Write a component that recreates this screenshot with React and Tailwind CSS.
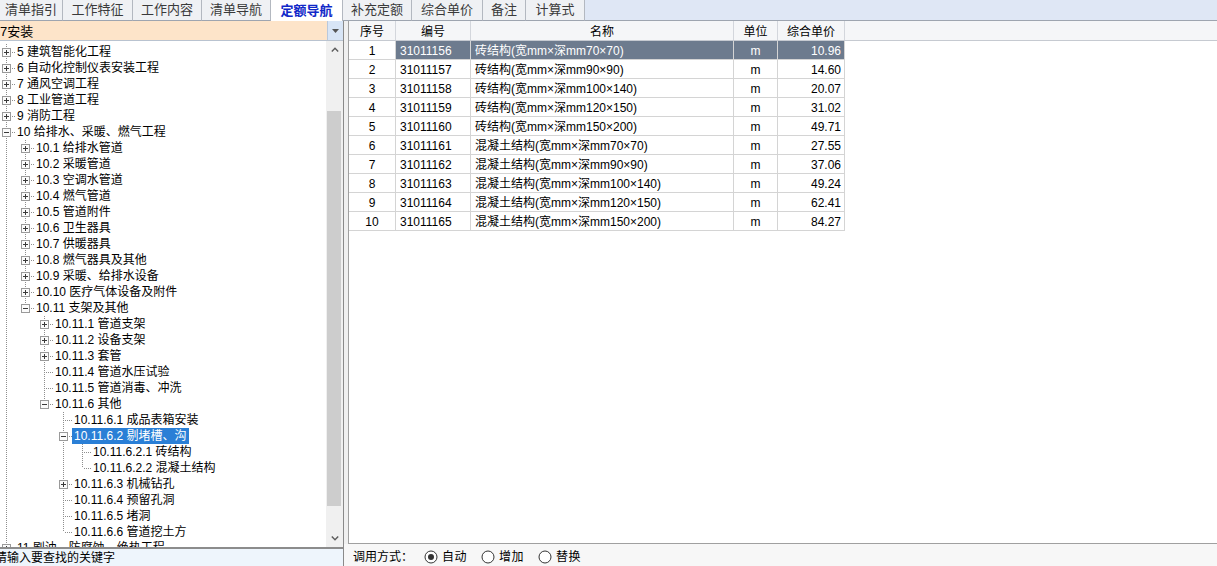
import React from "react";

const treeRaw = [
  [0, "5 建筑智能化工程", "p"],
  [0, "6 自动化控制仪表安装工程", "p"],
  [0, "7 通风空调工程", "p"],
  [0, "8 工业管道工程", "p"],
  [0, "9 消防工程", "p"],
  [0, "10 给排水、采暖、燃气工程", "m"],
  [1, "10.1 给排水管道", "p"],
  [1, "10.2 采暖管道", "p"],
  [1, "10.3 空调水管道", "p"],
  [1, "10.4 燃气管道", "p"],
  [1, "10.5 管道附件", "p"],
  [1, "10.6 卫生器具", "p"],
  [1, "10.7 供暖器具", "p"],
  [1, "10.8 燃气器具及其他", "p"],
  [1, "10.9 采暖、给排水设备", "p"],
  [1, "10.10 医疗气体设备及附件", "p"],
  [1, "10.11 支架及其他", "m"],
  [2, "10.11.1 管道支架", "p"],
  [2, "10.11.2 设备支架", "p"],
  [2, "10.11.3 套管", "p"],
  [2, "10.11.4 管道水压试验", "l"],
  [2, "10.11.5 管道消毒、冲洗", "l"],
  [2, "10.11.6 其他", "m"],
  [3, "10.11.6.1 成品表箱安装", "l"],
  [3, "10.11.6.2 剔堵槽、沟", "m", true],
  [4, "10.11.6.2.1 砖结构", "l"],
  [4, "10.11.6.2.2 混凝土结构", "l"],
  [3, "10.11.6.3 机械钻孔", "p"],
  [3, "10.11.6.4 预留孔洞", "l"],
  [3, "10.11.6.5 堵洞", "l"],
  [3, "10.11.6.6 管道挖土方", "l"],
  [0, "11 刷油、防腐蚀、绝热工程", "p"],
];

function buildTree() {
  const out = [];
  const stack = [];
  treeRaw.forEach((n, i) => {
    const [level, label, type, sel] = n;
    let last = level > 0;
    for (let j = i + 1; j < treeRaw.length; j++) {
      if (treeRaw[j][0] < level) { last = true; break; }
      if (treeRaw[j][0] === level) { last = false; break; }
    }
    if (level === 0) last = false;
    const anc = stack.slice(0, level);
    stack[level] = last;
    out.push({ level, label, type, sel: !!sel, last, anc });
  });
  return out;
}

const DOT = "#8e8e8e";

function Connector({ level, type, last, anc }) {
  const w = 15 + 19 * level;
  const cx = 6.5 + 19 * level;
  return (
    <svg width={w} height={16} className="shrink-0" shapeRendering="crispEdges">
      {anc.map((isLast, k) =>
        !isLast ? (
          <line key={k} x1={6.5 + 19 * k} y1={0} x2={6.5 + 19 * k} y2={16} stroke={DOT} strokeDasharray="1 1" />
        ) : null
      )}
      <line x1={cx} y1={0} x2={cx} y2={last ? 8 : 16} stroke={DOT} strokeDasharray="1 1" />
      <line x1={cx + 1} y1={8.5} x2={w} y2={8.5} stroke={DOT} strokeDasharray="1 1" />
      {type !== "l" && (
        <g>
          <rect x={cx - 4} y={4.5} width={8} height={8} fill="#fbfbfb" stroke="#9a9a9a" />
          <line x1={4 + 19 * level} y1={8.5} x2={9 + 19 * level} y2={8.5} stroke="#3a3a3a" />
          {type === "p" && <line x1={cx} y1={6} x2={cx} y2={11} stroke="#3a3a3a" />}
        </g>
      )}
    </svg>
  );
}

const rows = [
  ["31011156", "砖结构(宽mm×深mm70×70)", "10.96"],
  ["31011157", "砖结构(宽mm×深mm90×90)", "14.60"],
  ["31011158", "砖结构(宽mm×深mm100×140)", "20.07"],
  ["31011159", "砖结构(宽mm×深mm120×150)", "31.02"],
  ["31011160", "砖结构(宽mm×深mm150×200)", "49.71"],
  ["31011161", "混凝土结构(宽mm×深mm70×70)", "27.55"],
  ["31011162", "混凝土结构(宽mm×深mm90×90)", "37.06"],
  ["31011163", "混凝土结构(宽mm×深mm100×140)", "49.24"],
  ["31011164", "混凝土结构(宽mm×深mm120×150)", "62.41"],
  ["31011165", "混凝土结构(宽mm×深mm150×200)", "84.27"],
];

function Tab({ label, w, active }) {
  if (active) {
    return (
      <div style={{ width: w }} className="h-full shrink-0 bg-white flex items-center justify-center border-r border-[#b3b8c0] text-[13px] font-bold text-[#1028c8]">
        {label}
      </div>
    );
  }
  return (
    <div style={{ width: w }} className="h-full shrink-0 bg-[#eff1f4] flex items-center justify-center border-r border-[#b3b8c0] border-b border-b-[#9ea5b0] text-[13px] text-[#3a3a3a]">
      {label}
    </div>
  );
}

function Radio({ checked, label }) {
  return (
    <div className="flex items-center gap-[4px]">
      <svg width="14" height="14" viewBox="0 0 14 14">
        <circle cx="7" cy="7" r="6" fill="#fff" stroke="#333" strokeWidth="1" />
        {checked && <circle cx="7" cy="7" r="3" fill="#333" />}
      </svg>
      <span className="tracking-[0.5px]">{label}</span>
    </div>
  );
}

function Cells({ r }) {
  return (
    <>
      <div className="w-[75px] flex items-center pl-[4px] pt-[2px] border-r border-b border-[#d4d4d4]">{r[0]}</div>
      <div className="w-[263px] flex items-center pl-[4px] pt-[2px] border-r border-b border-[#d4d4d4]">{r[1]}</div>
      <div className="w-[44px] flex items-center justify-center pt-[2px] border-r border-b border-[#d4d4d4]">m</div>
      <div className="w-[67px] flex items-center justify-end pr-[3px] pt-[2px] border-r border-b border-[#d4d4d4]">{r[2]}</div>
    </>
  );
}

export default function App() {
  const tree = buildTree();
  return (
    <div className="w-[1217px] h-[566px] flex flex-col overflow-hidden bg-white text-[12px] text-black font-['Liberation_Sans','Noto_Sans_CJK_SC',sans-serif]">
      {/* tab strip */}
      <div className="h-[21px] flex shrink-0 bg-[#dfe7f5]">
        <Tab label="清单指引" w={63} />
        <Tab label="工作特征" w={70} />
        <Tab label="工作内容" w={69} />
        <Tab label="清单导航" w={69} />
        <Tab label="定额导航" w={72} active />
        <Tab label="补充定额" w={69} />
        <Tab label="综合单价" w={71} />
        <Tab label="备注" w={43} />
        <Tab label="计算式" w={59} />
        <div className="flex-1 border-b border-[#9ea5b0]" />
      </div>

      <div className="flex-1 flex min-h-0">
        {/* left panel */}
        <div className="w-[344px] shrink-0 flex flex-col border-r border-[#8a8a8a]">
          <div className="h-[20px] shrink-0 flex border-b border-[#b9c3d0] bg-[#fde4c9]">
            <div className="flex-1 flex items-center pt-[1px] text-[13px] leading-none">7安装</div>
            <div className="w-[16px] flex items-center justify-center bg-[#d8e5f6] border-l border-[#b9c8dc]">
              <svg width="7" height="4" viewBox="0 0 7 4"><path d="M0 0 H7 L3.5 4 Z" fill="#555" /></svg>
            </div>
          </div>
          <div className="flex-1 flex min-h-0">
            <div className="flex-1 overflow-hidden pt-[3px]">
              {tree.map((n, i) => (
                <div key={i} className="h-[16px] flex items-center">
                  <Connector level={n.level} type={n.type} last={n.last} anc={n.anc} />
                  {n.sel ? (
                    <span className="px-[2px] leading-[16px] whitespace-nowrap bg-[#2a7fd6] text-white">{n.label}</span>
                  ) : (
                    <span className="px-[2px] leading-[16px] whitespace-nowrap">{n.label}</span>
                  )}
                </div>
              ))}
            </div>
            <div className="w-[17px] shrink-0 bg-[#f0f0f0] flex flex-col">
              <div className="h-[17px] flex items-center justify-center">
                <svg width="8" height="5" viewBox="0 0 8 5"><path d="M0.8 4.5 L4 1.2 L7.2 4.5" fill="none" stroke="#5c5c5c" strokeWidth="1.4" /></svg>
              </div>
              <div className="flex-1">
                <div className="ml-[1px] mt-[53px] w-[14px] h-[395px] bg-[#cdcdcd]" />
              </div>
              <div className="h-[17px] flex items-center justify-center">
                <svg width="8" height="5" viewBox="0 0 8 5"><path d="M0.8 0.5 L4 3.8 L7.2 0.5" fill="none" stroke="#5c5c5c" strokeWidth="1.4" /></svg>
              </div>
            </div>
          </div>
          <div className="h-[19px] shrink-0 border-t-2 border-[#8c8c8c] bg-[#eef5fc] flex items-center pt-[1px] overflow-hidden">
            <span className="ml-[-5px] whitespace-nowrap text-[12px]">请输入要查找的关键字</span>
          </div>
        </div>

        {/* right panel */}
        <div className="flex-1 flex flex-col bg-[#f0f0f0] min-w-0">
          <div className="flex-1 ml-[4px] bg-white border-l border-b border-[#a0a0a0] flex flex-col min-h-0">
            <div className="h-[20px] flex shrink-0 bg-[#f5f6f8] border-b border-[#c6cad1]">
              <div className="w-[47px] flex items-center justify-center pt-[2px] border-r border-[#d3d6dc]">序号</div>
              <div className="w-[75px] flex items-center justify-center pt-[2px] border-r border-[#d3d6dc]">编号</div>
              <div className="w-[263px] flex items-center justify-center pt-[2px] border-r border-[#d3d6dc]">名称</div>
              <div className="w-[44px] flex items-center justify-center pt-[2px] border-r border-[#d3d6dc]">单位</div>
              <div className="w-[67px] flex items-center justify-center pt-[2px] border-r border-[#d3d6dc]">综合单价</div>
              <div className="flex-1" />
            </div>
            {rows.map((r, i) => (
              <div key={i} className="h-[19px] flex shrink-0">
                <div className="w-[47px] flex items-center justify-center pt-[2px] border-r border-b border-[#d4d4d4]">{i + 1}</div>
                {i === 0 ? (
                  <div className="flex bg-[#6d7b8e] text-white">
                    <Cells r={r} />
                  </div>
                ) : (
                  <div className="flex">
                    <Cells r={r} />
                  </div>
                )}
              </div>
            ))}
          </div>
          <div className="h-[22px] shrink-0 flex items-center pl-[9px] pt-[3px] gap-[14px] bg-[#f7f7f7] text-[12px]">
            <span className="mr-[-3px]">调用方式：</span>
            <Radio checked label="自动" />
            <Radio label="增加" />
            <Radio label="替换" />
          </div>
        </div>
      </div>
    </div>
  );
}
